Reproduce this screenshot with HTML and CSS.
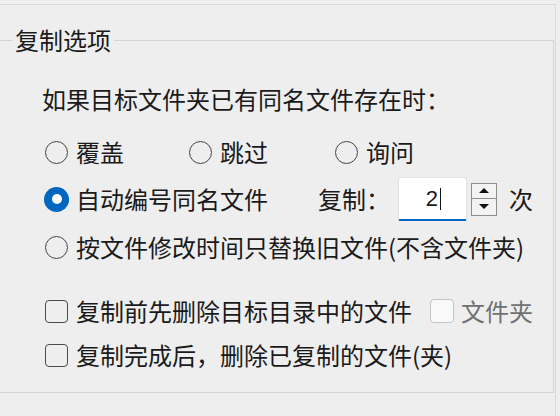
FILE: index.html
```html
<!DOCTYPE html>
<html lang="zh-CN">
<head>
    <meta charset="UTF-8">
    <meta name="viewport" content="width=device-width, initial-scale=1.0">
    <title>复制选项</title>
    <link rel="stylesheet" href="styles.css">
</head>
<body>
    <div class="panel">
        <fieldset class="group">
            <legend>复制选项</legend>
            <div class="group-body">
                <p class="prompt">如果目标文件夹已有同名文件存在时：</p>

                <div class="row row-choices">
                    <label class="opt opt-first"><span class="radio"></span>覆盖</label>
                    <label class="opt opt-second"><span class="radio"></span>跳过</label>
                    <label class="opt"><span class="radio"></span>询问</label>
                </div>

                <div class="row">
                    <label class="opt opt-auto"><span class="radio checked"></span>自动编号同名文件</label>
                    <span class="count-label">复制：</span>
                    <div class="count-input">2<span class="caret"></span></div>
                    <div class="spin">
                        <span class="spin-btn"><span class="arrow-up"></span></span>
                        <span class="spin-btn"><span class="arrow-down"></span></span>
                    </div>
                    <span class="unit">次</span>
                </div>

                <div class="row">
                    <label class="opt"><span class="radio"></span>按文件修改时间只替换旧文件(不含文件夹)</label>
                </div>

                <div class="row row-check first-check">
                    <label class="opt"><span class="check"></span>复制前先删除目标目录中的文件</label>
                    <label class="opt opt-disabled"><span class="check disabled"></span>文件夹</label>
                </div>

                <div class="row row-check">
                    <label class="opt"><span class="check"></span>复制完成后，删除已复制的文件(夹)</label>
                </div>
            </div>
        </fieldset>
    </div>
</body>
</html>
```

FILE: styles.css
```css
body {
    margin: 0;
    padding: 0;
    background-color: #eeeeef;
    color: #1a1a1a;
    font-family: "Noto Sans CJK SC", "Noto Sans", sans-serif;
    font-size: 24px;
}

.panel {
    box-sizing: border-box;
    width: 556px;
    height: 412px;
    margin-top: 4px;
    border-top: 1px solid #d9d9d9;
    border-right: 1px solid #d9d9d9;
}

.group {
    box-sizing: border-box;
    width: 554px;
    margin: 21px 0 0 0;
    padding: 0 0 15px 0;
    border: 1px solid #d2d2d2;
    border-left: none;
}

.group legend {
    margin-left: 12px;
    padding: 0 3px;
    line-height: 28px;
}

.group-body {
    padding: 25px 0 0 45px;
}

.prompt {
    margin: 0 0 0 -3px;
    height: 40px;
    line-height: 40px;
}

.row {
    display: flex;
    align-items: center;
    height: 48px;
}

.row-choices {
    margin-top: 10px;
    height: 46px;
}

.row-check {
    height: 44px;
}

.first-check {
    margin-top: 18px;
}

.opt {
    display: flex;
    align-items: center;
    line-height: 1;
}

.opt-first {
    width: 144px;
}

.opt-second {
    width: 146px;
}

.opt-auto {
    width: 273px;
}

.radio {
    box-sizing: border-box;
    width: 23px;
    height: 23px;
    margin-right: 8px;
    border: 1.5px solid #454545;
    border-radius: 50%;
}

.radio.checked {
    position: relative;
    width: 25px;
    height: 25px;
    margin: 0 7px 0 -1px;
    border: none;
    background-color: #0067c0;
}

.radio.checked::after {
    content: "";
    position: absolute;
    left: 7.5px;
    top: 7.5px;
    width: 10px;
    height: 10px;
    border-radius: 50%;
    background-color: #fff;
}

.check {
    box-sizing: border-box;
    width: 23px;
    height: 23px;
    margin-right: 8px;
    border: 1.5px solid #4a4a4a;
    border-radius: 4px;
}

.opt-disabled {
    margin-left: 18px;
    color: #707070;
}

.check.disabled {
    width: 24px;
    height: 24px;
    margin-right: 7px;
    border: 1px solid #c4c4c4;
    background-color: #f9f9f9;
}

.count-label {
    line-height: 1;
}

.count-input {
    box-sizing: border-box;
    display: flex;
    align-items: center;
    justify-content: center;
    width: 69px;
    height: 44px;
    margin-left: 8px;
    padding-left: 2px;
    background-color: #fff;
    border: 1px solid #e2e2e2;
    border-bottom: 2px solid #0067c0;
    border-radius: 4px 4px 2px 2px;
    font-family: "Liberation Sans", Arial, sans-serif;
    font-size: 22px;
    line-height: 1;
}

.caret {
    display: inline-block;
    width: 1.5px;
    height: 22px;
    margin-left: 2px;
    background-color: #111;
}

.spin {
    display: flex;
    flex-direction: column;
    width: 26px;
    margin-left: 4px;
}

.spin-btn {
    box-sizing: border-box;
    display: flex;
    align-items: center;
    justify-content: center;
    height: 16px;
    background-color: #f3f3f3;
    border: 1px solid #8e8e8e;
}

.spin-btn + .spin-btn {
    border-top: none;
    height: 17px;
}

.arrow-up {
    width: 0;
    height: 0;
    border-left: 5px solid transparent;
    border-right: 5px solid transparent;
    border-bottom: 5px solid #111;
}

.arrow-down {
    width: 0;
    height: 0;
    border-left: 5px solid transparent;
    border-right: 5px solid transparent;
    border-top: 5px solid #111;
}

.unit {
    margin-left: 12px;
    line-height: 1;
}
```
